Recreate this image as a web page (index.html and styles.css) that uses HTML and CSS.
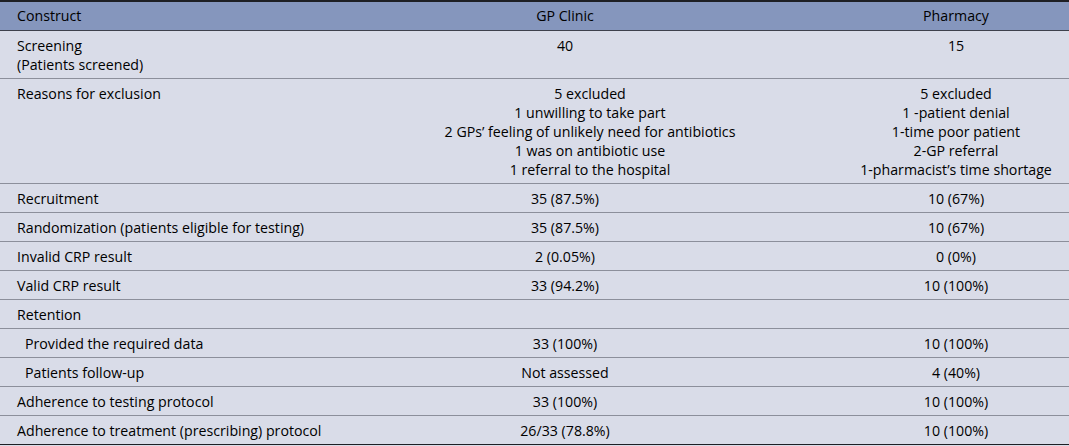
FILE: index.html
```html
<!DOCTYPE html>
<html lang="en">
<head>
<meta charset="utf-8">
<title>Feasibility outcomes</title>
<link rel="stylesheet" href="styles.css">
</head>
<body>
<table class="data">
  <colgroup>
    <col class="c1">
    <col class="c2">
    <col class="c3">
  </colgroup>
  <thead>
    <tr>
      <th class="lbl">Construct</th>
      <th>GP Clinic</th>
      <th>Pharmacy</th>
    </tr>
  </thead>
  <tbody>
    <tr>
      <td class="lbl">Screening<br>(Patients screened)</td>
      <td>40</td>
      <td>15</td>
    </tr>
    <tr>
      <td class="lbl">Reasons for exclusion</td>
      <td class="shift">5 excluded<br>1 unwilling to take part<br>2 GPs’ feeling of unlikely need for antibiotics<br>1 was on antibiotic use<br>1 referral to the hospital</td>
      <td>5 excluded<br>1 -patient denial<br>1-time poor patient<br>2-GP referral<br>1-pharmacist’s time shortage</td>
    </tr>
    <tr>
      <td class="lbl">Recruitment</td>
      <td>35 (87.5%)</td>
      <td>10 (67%)</td>
    </tr>
    <tr>
      <td class="lbl">Randomization (patients eligible for testing)</td>
      <td>35 (87.5%)</td>
      <td>10 (67%)</td>
    </tr>
    <tr>
      <td class="lbl">Invalid CRP result</td>
      <td>2 (0.05%)</td>
      <td>0 (0%)</td>
    </tr>
    <tr>
      <td class="lbl">Valid CRP result</td>
      <td>33 (94.2%)</td>
      <td>10 (100%)</td>
    </tr>
    <tr>
      <td class="lbl">Retention</td>
      <td></td>
      <td></td>
    </tr>
    <tr>
      <td class="lbl sub">Provided the required data</td>
      <td>33 (100%)</td>
      <td>10 (100%)</td>
    </tr>
    <tr>
      <td class="lbl sub">Patients follow-up</td>
      <td>Not assessed</td>
      <td>4 (40%)</td>
    </tr>
    <tr>
      <td class="lbl">Adherence to testing protocol</td>
      <td>33 (100%)</td>
      <td>10 (100%)</td>
    </tr>
    <tr>
      <td class="lbl">Adherence to treatment (prescribing) protocol</td>
      <td>26/33 (78.8%)</td>
      <td>10 (100%)</td>
    </tr>
  </tbody>
</table>
</body>
</html>
```

FILE: styles.css
```css
html, body {
  margin: 0;
  padding: 0;
  background: #d9dce8;
}

.data {
  width: 1069px;
  border-collapse: collapse;
  table-layout: fixed;
  font-family: "Open Sans", "Noto Sans", sans-serif;
  font-size: 14.2px;
  line-height: 19px;
  color: #000;
  border-top: 2px solid #1e1f24;
  border-bottom: 1px solid #1e1f24;
}

.c1 { width: 287px; }
.c2 { width: 556px; }
.c3 { width: 226px; }

.data th {
  background: #8596bd;
  font-weight: normal;
  text-align: center;
  padding: 4px 0 5px;
  border-bottom: 1px solid #3e414c;
}

.data td {
  background: #d9dce8;
  text-align: center;
  vertical-align: top;
  padding: 5px 0 4px;
  border-bottom: 1px solid #8c8f9b;
}

.data tbody tr:last-child td {
  border-bottom: none;
}

.data .lbl {
  text-align: left;
  white-space: nowrap;
  overflow: visible;
  padding-left: 17px;
}

.data .sub {
  padding-left: 25px;
}

.data .shift {
  padding-left: 50px;
}
```
